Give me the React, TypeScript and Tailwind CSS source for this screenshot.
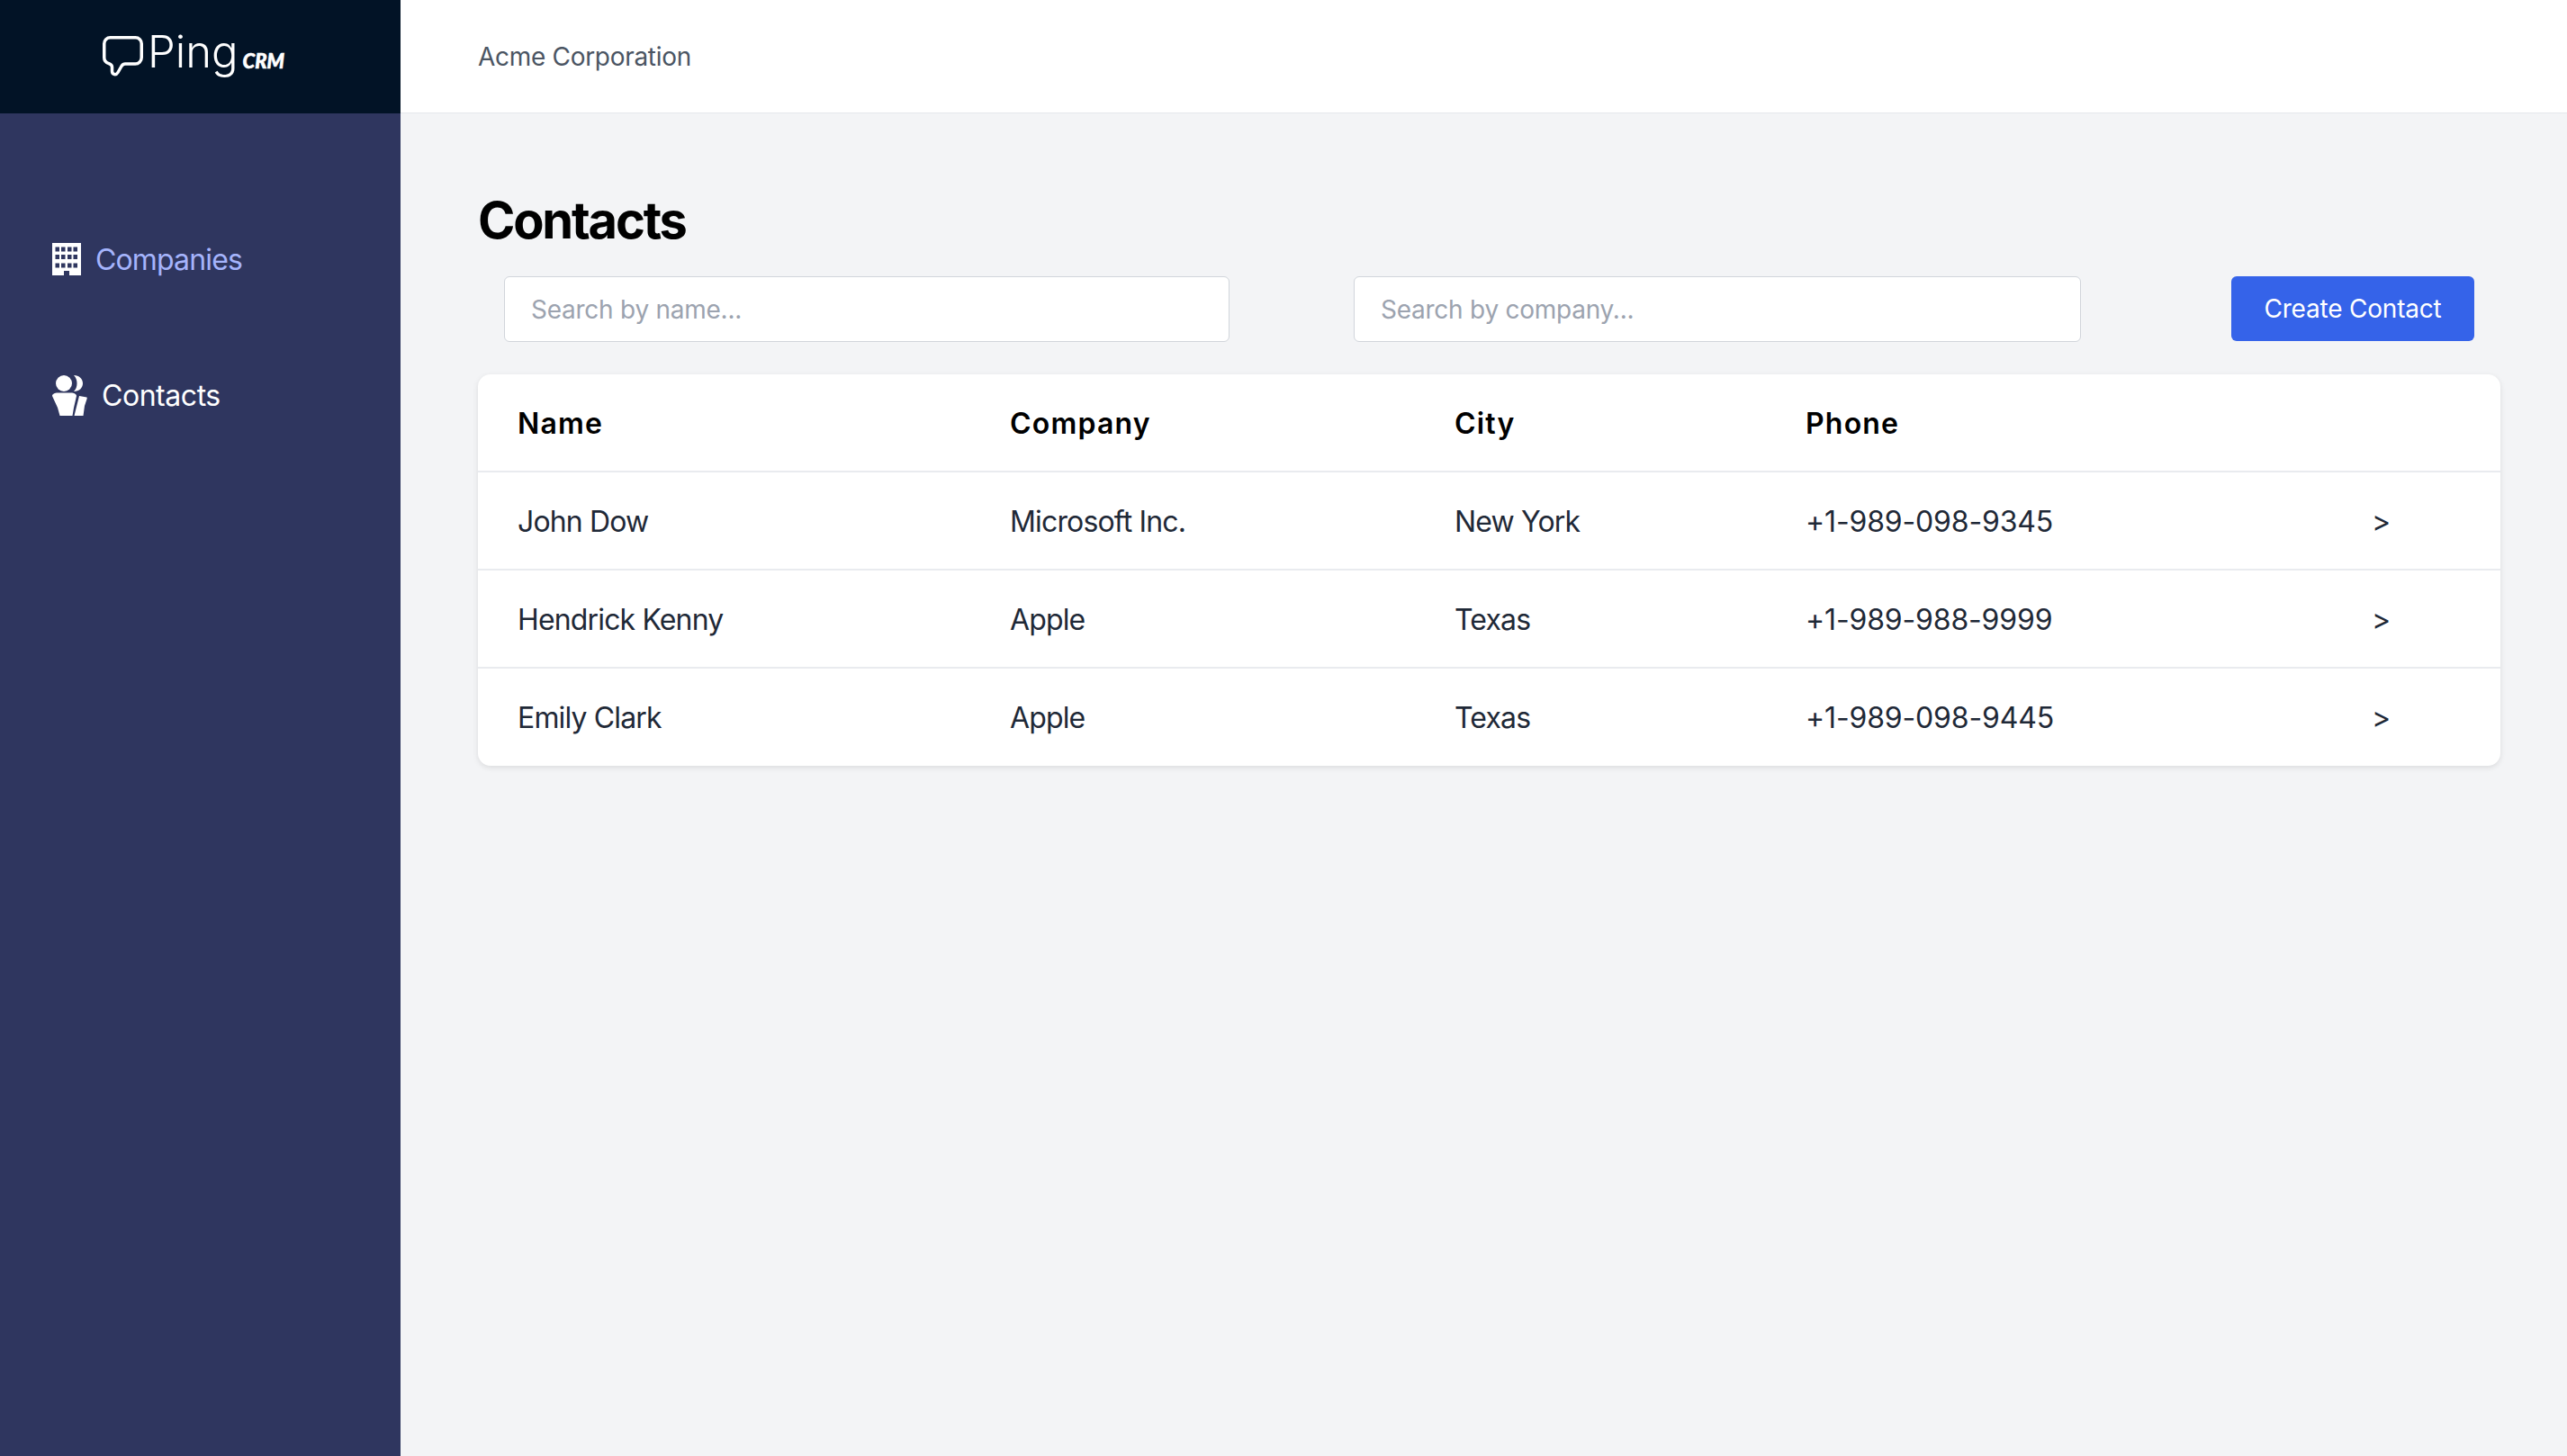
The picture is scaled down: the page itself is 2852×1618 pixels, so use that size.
const font = "font-['Inter',sans-serif]";

const rows = [
  ["John Dow", "Microsoft Inc.", "New York", "+1-989-098-9345"],
  ["Hendrick Kenny", "Apple", "Texas", "+1-989-988-9999"],
  ["Emily Clark", "Apple", "Texas", "+1-989-098-9445"],
];

function Building() {
  const cols = [3.5, 10, 17, 23.5];
  const ys = [4.5, 13, 22.5];
  return (
    <svg width="32" height="36" viewBox="0 0 32 36" className="shrink-0">
      <rect width="32" height="36" fill="#fff" />
      {ys.map((y) => cols.map((x) => <rect key={`${x}-${y}`} x={x} y={y} width="4.5" height="5" fill="#2f365f" />))}
      <rect x="13" y="31" width="6" height="5" fill="#2f365f" />
    </svg>
  );
}

function People() {
  return (
    <svg width="39" height="45" viewBox="0 0 39 45" className="shrink-0" fill="#fff">
      <circle cx="13" cy="9" r="9" />
      <path d="M24 0c6 0 10 4 10 9s-4 9-10 9c2.500-2.500 3.500-5.500 3.500-9S26.500 2.500 24 0z" />
      <path d="M0 23c0-2 3-3.500 6-3.500h15c3 0 6 1.500 6 3.500l-3 13-1.500 9H8.500L6 36z" />
      <path d="M30 23l8.500 1.500c.500 1 0 2-.500 3.500l-2 6-1.500 11H24.500l2-8z" />
    </svg>
  );
}

function Logo() {
  return (
    <div className="flex items-start pl-[114px] pt-[30px]">
      <svg width="45" height="46" viewBox="0 0 45 46" fill="none" className="mt-[10px] shrink-0">
        <path d="M8.500 1.750H36.500a6.750 6.750 0 0 1 6.750 6.750V24a7 7 0 0 1-7 7H25c-2 0-3 1-4 2.500l-4 7c-2 3.500-6.500 2.500-6.500-1.500V34.500c0-2-1.500-3-3.500-3.800C3.500 29.500 1.750 27.500 1.750 24V8.500A6.750 6.750 0 0 1 8.500 1.750z" stroke="#fff" strokeWidth="3.500" strokeLinejoin="round" />
      </svg>
      <span className={`ml-[5px] ${font} text-[49px] leading-[56px] font-light text-white`}>Ping</span>
      <span className="ml-[5px] mt-[26px] font-['Lato',sans-serif] text-[22px] leading-[24px] font-black italic text-white [-webkit-text-stroke:0.6px_white]">CRM</span>
    </div>
  );
}

export default function App() {
  return (
    <div className={`flex min-h-[1618px] w-[2852px] ${font}`}>
      <aside className="w-[445px] shrink-0 bg-[#2f365f]">
        <div className="h-[126px] bg-[#021326]">
          <Logo />
        </div>
        <nav className="flex flex-col pl-[58px] pt-[144px]">
          <a className="flex h-[36px] items-center gap-[16px] text-[32px] tracking-[-0.85px] text-[#a5b4fc]">
            <Building />
            <span className="pt-[1px]">Companies</span>
          </a>
          <a className="mt-[111px] flex h-[45px] items-center gap-[16px] text-[32px] tracking-[-0.45px] text-white">
            <People />
            Contacts
          </a>
        </nav>
      </aside>
      <div className="flex min-w-0 flex-1 flex-col bg-[#f3f4f6]">
        <header className="flex h-[126px] items-center border-b border-[#e5e7eb] bg-white pl-[86px] text-[28px] tracking-[-0.3px] text-[#4b5563]">
          Acme Corporation
        </header>
        <main className="pl-[86px] pr-[74px] pt-[84px]">
          <h1 className="text-[56px] font-bold leading-[70px] tracking-[-2.2px] text-black">Contacts</h1>
          <div className="mt-[27px] flex items-start px-[29px]">
            <input placeholder="Search by name..." className="h-[73px] w-[806px] rounded-[6px] border border-[#d1d5db] bg-white px-[29px] text-[28px] tracking-[-0.25px] outline-none placeholder:text-[#9ca3af]" />
            <input placeholder="Search by company..." className="ml-[138px] h-[73px] w-[808px] rounded-[6px] border border-[#d1d5db] bg-white px-[29px] text-[28px] tracking-[-0.25px] outline-none placeholder:text-[#9ca3af]" />
            <button className="ml-auto h-[72px] w-[270px] rounded-[6px] bg-[#3563e9] text-[28px] tracking-[-0.2px] text-white">Create Contact</button>
          </div>
          <div className="mt-[36px] overflow-hidden rounded-[14px] bg-white shadow-[0_2px_6px_rgba(0,0,0,0.1)]">
            <table className="w-full table-fixed border-collapse text-left">
              <colgroup>
                <col className="w-[547px]" />
                <col className="w-[494px]" />
                <col className="w-[390px]" />
                <col className="w-[630px]" />
                <col />
              </colgroup>
              <thead>
                <tr className="h-[108px]">
                  {["Name", "Company", "City", "Phone", ""].map((h) => (
                    <th key={h} className="pl-[44px] pt-[2px] text-[32px] font-semibold tracking-[1.2px] text-black">{h}</th>
                  ))}
                </tr>
              </thead>
              <tbody>
                {rows.map((r) => (
                  <tr key={r[0]} className="h-[109px] border-t-2 border-[#e9ebef]">
                    {r.map((c, i) => (
                      <td key={c} className={i === 3 ? "pl-[44px] pt-[2px] text-[32px] tracking-[-0.15px] text-[#1f2937]" : "pl-[44px] pt-[2px] text-[32px] tracking-[-0.85px] text-[#1f2937]"}>{c}</td>
                    ))}
                    <td className="pl-[43px] pt-[2px] text-[32px] text-[#1f2937]">&gt;</td>
                  </tr>
                ))}
              </tbody>
            </table>
          </div>
        </main>
      </div>
    </div>
  );
}
